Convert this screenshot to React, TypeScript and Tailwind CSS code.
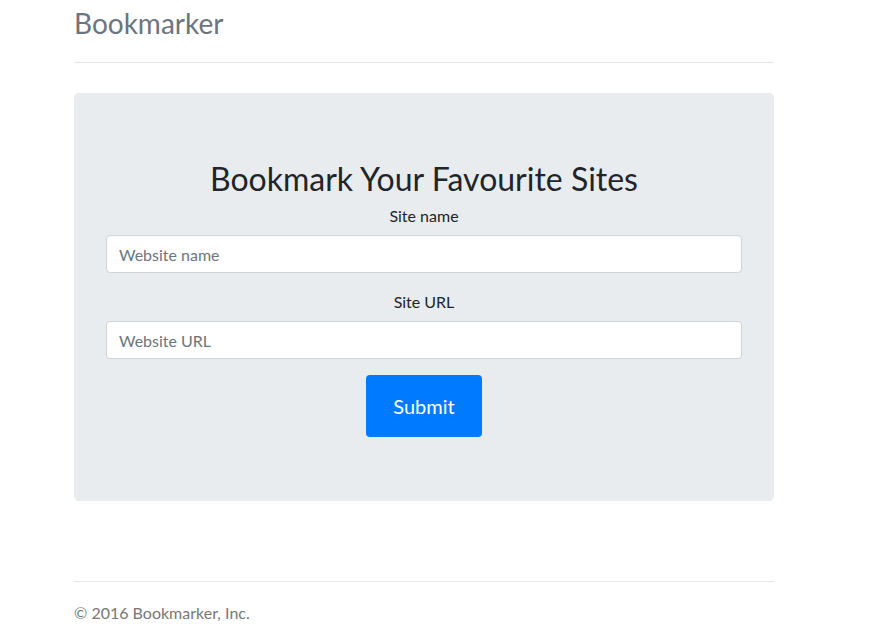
export default function App() {
  return (
    <div className="min-h-screen bg-white font-['Lato',sans-serif] text-[#212529]">
      <div className="ml-[74px] w-[700px]">
        {/* Header */}
        <div className="border-b border-[#e5e5e5] pt-[6px] pb-[22px]">
          <h3 className="text-[28px] leading-[34px] text-[#6c757d]">Bookmarker</h3>
        </div>

        {/* Jumbotron */}
        <div className="mt-[30px] rounded-[5px] bg-[#e9ecef] px-8 py-16 text-center">
          <h2 className="mb-[5px] pt-[3px] text-[32px] leading-[38px] text-[#212529]">Bookmark Your Favourite Sites</h2>
          <form onSubmit={(e) => e.preventDefault()}>
            <div className="mb-4">
              <label className="mb-[7px] block pt-[1px] text-base leading-6">Site name</label>
              <input
                type="text"
                placeholder="Website name"
                className="block h-[38px] w-full rounded-[4px] border border-[#ced4da] bg-white px-3 text-base text-[#495057] placeholder:text-[#6c757d] outline-none"
              />
            </div>
            <div className="mb-4">
              <label className="mb-[7px] block pt-[1px] text-base leading-6">Site URL</label>
              <input
                type="text"
                placeholder="Website URL"
                className="block h-[38px] w-full rounded-[4px] border border-[#ced4da] bg-white px-3 text-base text-[#495057] placeholder:text-[#6c757d] outline-none"
              />
            </div>
            <button
              type="submit"
              className="h-[62px] w-[116px] rounded-[4px] bg-[#007bff] text-[20px] text-white"
            >
              Submit
            </button>
          </form>
        </div>

        {/* Footer */}
        <div className="mt-[80px] border-t border-[#e5e5e5] pt-[19px]">
          <p className="text-base leading-6 text-[#777]">© 2016 Bookmarker, Inc.</p>
        </div>
      </div>
    </div>
  )
}
